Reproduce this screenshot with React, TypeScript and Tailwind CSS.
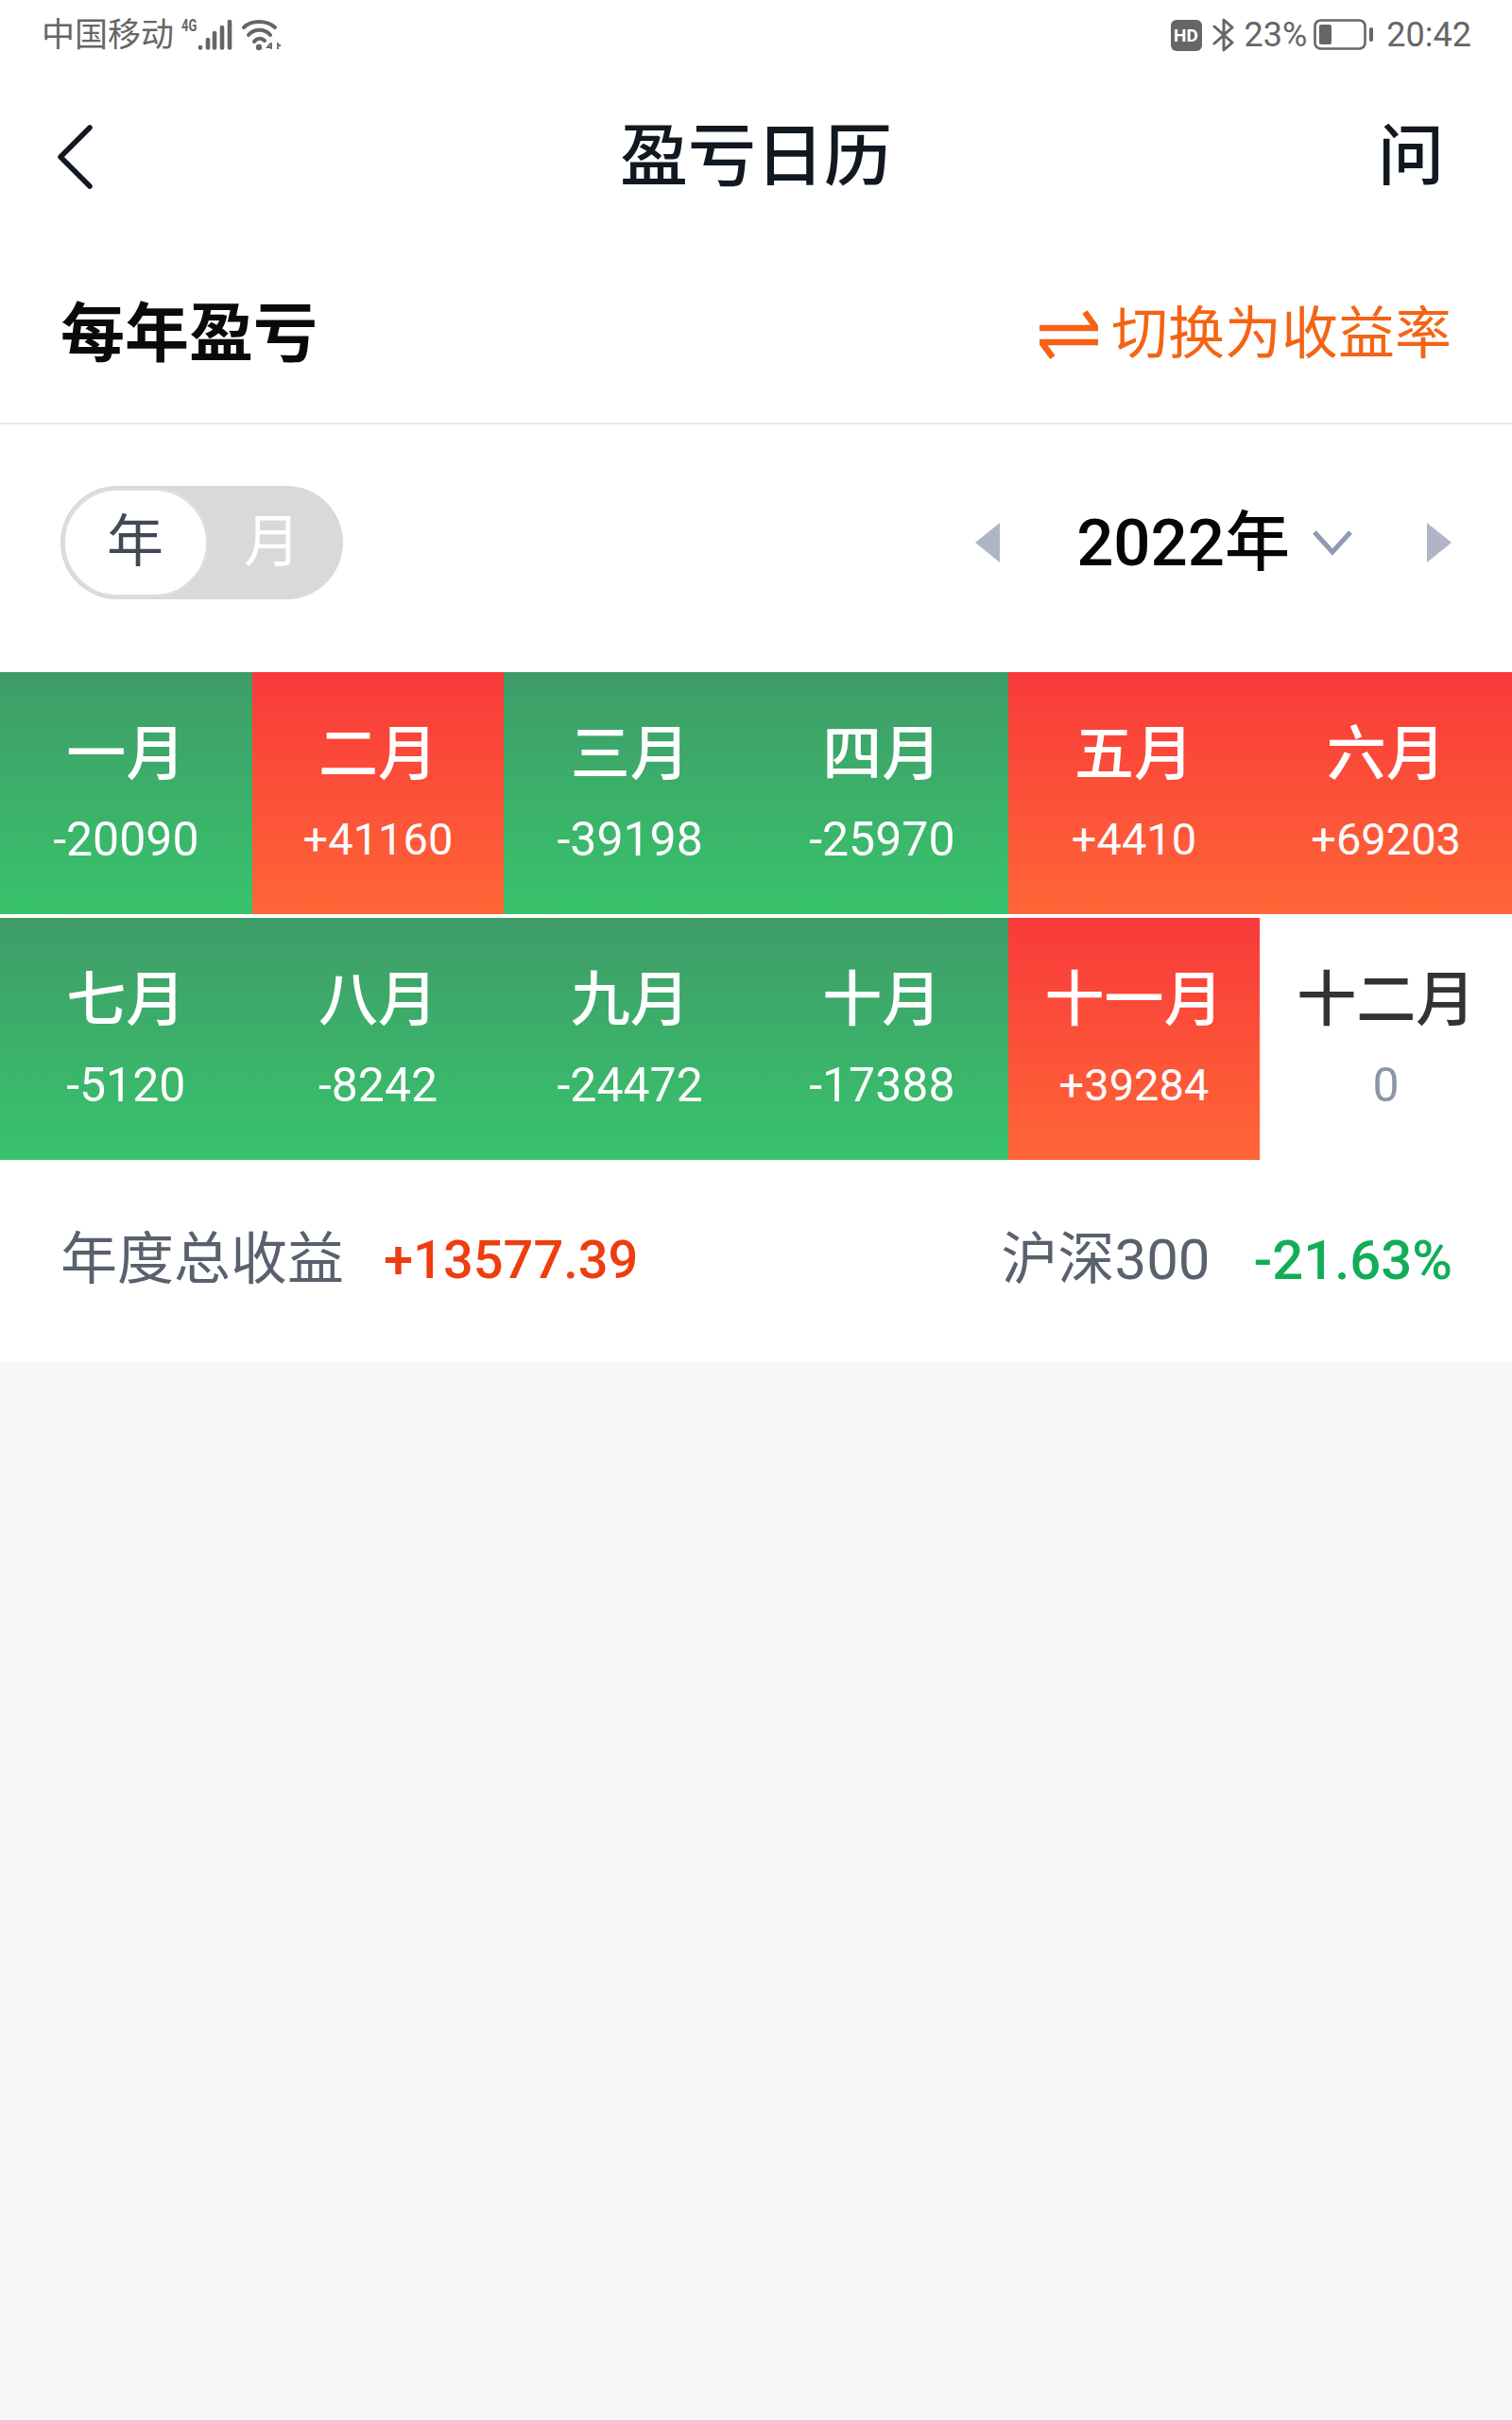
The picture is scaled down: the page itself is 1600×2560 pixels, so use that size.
import React from 'react';

const FONT = 'font-[Roboto,"Noto_Sans_CJK_SC",sans-serif]';

interface MonthItem {
  name: string;
  value: string;
  trend: 'up' | 'down' | 'none';
}

const months: MonthItem[] = [
  { name: '一月', value: '-20090', trend: 'down' },
  { name: '二月', value: '+41160', trend: 'up' },
  { name: '三月', value: '-39198', trend: 'down' },
  { name: '四月', value: '-25970', trend: 'down' },
  { name: '五月', value: '+4410', trend: 'up' },
  { name: '六月', value: '+69203', trend: 'up' },
  { name: '七月', value: '-5120', trend: 'down' },
  { name: '八月', value: '-8242', trend: 'down' },
  { name: '九月', value: '-24472', trend: 'down' },
  { name: '十月', value: '-17388', trend: 'down' },
  { name: '十一月', value: '+39284', trend: 'up' },
  { name: '十二月', value: '0', trend: 'none' },
];

function StatusBar() {
  return (
    <div className="h-[72px] pt-[2px] flex items-center justify-between pl-[44px] pr-[43px] text-[#666666]">
      <div className="flex items-center">
        <span className="text-[35px] leading-none">中国移动</span>
        <div className="relative ml-[6px] w-[110px] h-[40px]">
          <span className="absolute left-[2px] top-[2px] text-[18px] leading-[16px] font-bold scale-x-[0.72] origin-left">4G</span>
          <svg width="110" height="40" viewBox="0 0 110 40" className="absolute inset-0">
            <g stroke="#666666" strokeWidth="4.6" strokeLinecap="round" fill="none">
              <path d="M22 33v0.5" />
              <path d="M30 25v8.5" />
              <path d="M37 18v15.5" />
              <path d="M45 12v21.5" />
              <path d="M53 6v27.5" />
            </g>
            <g fill="none" stroke="#666666" strokeWidth="4" strokeLinecap="round">
              <path d="M68 12C76 4 92 4 101 12" />
              <path d="M73 20C79 13 90 13 96 20" />
              <path d="M79 27C82 23 87 23 90 26" />
            </g>
            <circle cx="84" cy="33" r="3.2" fill="#666666" />
            <path d="M96 29l-3 4h5M97 28v7M104 28v7M104 31h3" fill="none" stroke="#666666" strokeWidth="1.8" />
          </svg>
        </div>
      </div>
      <div className="flex items-center">
        <span className="w-[33px] h-[33px] rounded-[6px] bg-[#666666] text-white text-[19px] font-bold leading-none flex items-center justify-center">HD</span>
        <svg width="24" height="38" viewBox="0 0 24 38" className="ml-[11px]">
          <path d="M2 10l19 17-9 8V3l9 8L2 28" fill="none" stroke="#666666" strokeWidth="3" strokeLinecap="round" strokeLinejoin="round" />
        </svg>
        <span className="ml-[10px] text-[36px] leading-none">23%</span>
        <svg width="63" height="34" viewBox="0 0 63 34" className="ml-[7px]">
          <rect x="1.5" y="1.5" width="53" height="30" rx="6" fill="none" stroke="#666666" strokeWidth="2.6" />
          <rect x="6" y="6" width="13" height="21" rx="2" fill="#666666" />
          <rect x="59" y="9" width="4" height="15" rx="2" fill="#666666" />
        </svg>
        <span className="ml-[14px] text-[36px] leading-none">20:42</span>
      </div>
    </div>
  );
}

function NavBar() {
  return (
    <div className="relative h-[186px] flex items-center justify-between pl-[56px] pr-[72px] pt-[2px]">
      <svg width="44" height="70" viewBox="0 0 44 70">
        <path d="M39 4L8 35l31 31" fill="none" stroke="#111820" strokeWidth="5.5" strokeLinecap="round" strokeLinejoin="round" />
      </svg>
      <h1 className="absolute inset-x-0 text-center text-[72px] leading-none font-medium text-[#111820]">盈亏日历</h1>
      <span className="text-[70px] leading-none font-medium text-[#111820]">问</span>
    </div>
  );
}

function SectionHeader() {
  return (
    <div className="h-[191px] pt-[3px] border-b-2 border-[#e8e8e8] flex items-center justify-between pl-[64px] pr-[64px]">
      <h2 className="text-[68px] leading-none font-bold text-[#0a0a0a]">每年盈亏</h2>
      <div className="flex items-center text-[#f46414]">
        <svg width="62" height="54" viewBox="0 0 62 54">
          <path d="M0 20h60L48 3M62 35H2l12 16" fill="none" stroke="#f46414" strokeWidth="6.5" strokeLinejoin="miter" />
        </svg>
        <span className="ml-[14px] text-[60px] leading-none">切换为收益率</span>
      </div>
    </div>
  );
}

function FilterRow() {
  return (
    <div className="h-[262px] pb-[12px] flex items-center justify-between pl-[64px] pr-[64px]">
      <div className="relative w-[299px] h-[120px] rounded-full bg-[#d9d9d9] flex items-center">
        <div className="w-[155px] h-[116px] ml-[2px] rounded-full bg-white border-[3px] border-[#dddddd]" />
        <span className="absolute left-[49px] text-[60px] leading-none text-[#414856]">年</span>
        <span className="absolute left-[194px] text-[60px] leading-none text-white">月</span>
      </div>
      <div className="flex items-center">
        <svg width="26" height="42" viewBox="0 0 26 42">
          <path d="M26 0v42L0 21z" fill="#b0b5c6" />
        </svg>
        <span className="ml-[81px] text-[69px] leading-none font-medium text-[#050505]">2022年</span>
        <svg width="42" height="28" viewBox="0 0 42 28" className="ml-[24px]">
          <path d="M2 3l19 21L40 3" fill="none" stroke="#8f9bb0" strokeWidth="5" />
        </svg>
        <svg width="26" height="42" viewBox="0 0 26 42" className="ml-[79px]">
          <path d="M0 0v42l26-21z" fill="#b0b5c6" />
        </svg>
      </div>
    </div>
  );
}

function MonthCell({ item }: { item: MonthItem }) {
  const bg =
    item.trend === 'up'
      ? 'bg-linear-to-b/srgb from-[#f83a3a] to-[#ff6637] text-white'
      : item.trend === 'down'
        ? 'bg-linear-to-b/srgb from-[#3f9c68] to-[#38c36c] text-white'
        : 'bg-white';
  return (
    <div className={`h-[256px] flex flex-col items-center pt-[49px] ${bg}`}>
      <span className={`text-[63px] leading-[76px] font-medium ${item.trend === 'none' ? 'text-[#333333]' : ''}`}>{item.name}</span>
      <span className={`mt-[22px] leading-[60px] ${item.trend === 'up' ? 'text-[47px]' : 'text-[50px]'} ${item.trend === 'none' ? 'text-[#8b95a5]' : ''}`}>{item.value}</span>
    </div>
  );
}

function Summary() {
  return (
    <div className="h-[214px] pb-[3px] bg-white flex items-center justify-between pl-[64px] pr-[63px]">
      <div className="flex items-center">
        <span className="text-[60px] leading-none text-[#59606e]">年度总收益</span>
        <span className="ml-[42px] text-[56px] leading-none font-medium text-[#ee3d0f]">+13577.39</span>
      </div>
      <div className="flex items-center">
        <span className="text-[60px] leading-none text-[#59606e] mr-[3px]">沪深300</span>
        <span className="ml-[43px] text-[58px] leading-none font-medium text-[#12ad57]">-21.63%</span>
      </div>
    </div>
  );
}

export default function App() {
  return (
    <div className={`w-[1600px] h-[2560px] bg-[#f7f7f7] overflow-hidden ${FONT}`}>
      <div className="bg-white">
        <StatusBar />
        <NavBar />
        <SectionHeader />
        <FilterRow />
        <div className="grid grid-cols-6 gap-y-[4px]">
          {months.map((m) => (
            <MonthCell key={m.name} item={m} />
          ))}
        </div>
        <Summary />
      </div>
    </div>
  );
}
